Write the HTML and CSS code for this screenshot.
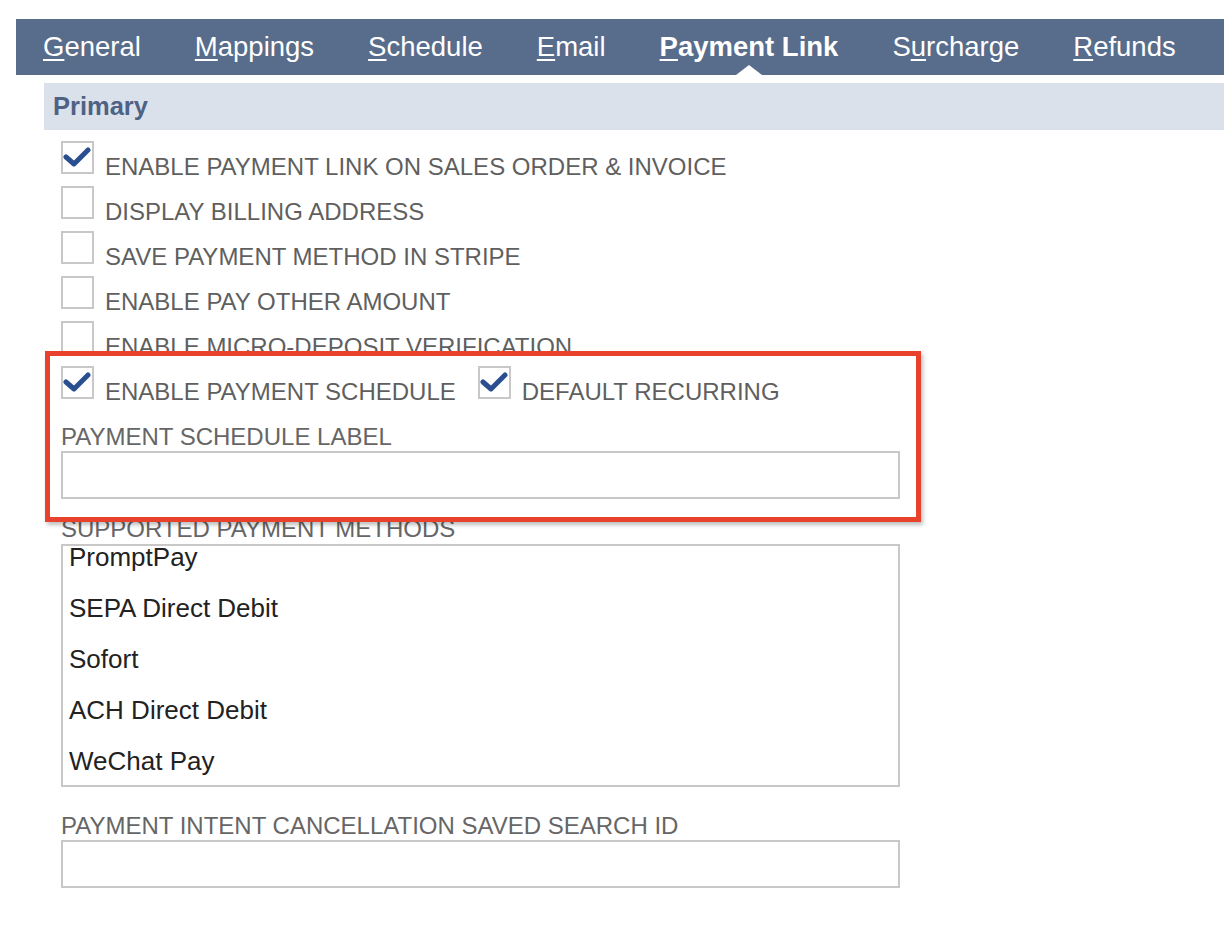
FILE: index.html
```html
<!DOCTYPE html>
<html>
<head>
  <title>Payment Link</title>
  <link rel="stylesheet" href="styles.css">
</head>
<body>
  <div class="tabs">
    <a class="tab"><u>G</u>eneral</a>
    <a class="tab"><u>M</u>appings</a>
    <a class="tab"><u>S</u>chedule</a>
    <a class="tab"><u>E</u>mail</a>
    <a class="tab active"><u>P</u>ayment Link</a>
    <a class="tab">S<u>u</u>rcharge</a>
    <a class="tab"><u>R</u>efunds</a>
  </div>

  <div class="section-head">Primary</div>

  <div class="form">
    <div class="check-row">
      <span class="box checked">
        <svg viewBox="0 0 29 29"><path d="M3 14l8 7 14-14" fill="none" stroke="#2a4f91" stroke-width="5" stroke-linecap="round" stroke-linejoin="round"/></svg>
      </span>
      <span class="check-label">ENABLE PAYMENT LINK ON SALES ORDER &amp; INVOICE</span>
    </div>
    <div class="check-row">
      <span class="box"></span>
      <span class="check-label">DISPLAY BILLING ADDRESS</span>
    </div>
    <div class="check-row">
      <span class="box"></span>
      <span class="check-label">SAVE PAYMENT METHOD IN STRIPE</span>
    </div>
    <div class="check-row">
      <span class="box"></span>
      <span class="check-label">ENABLE PAY OTHER AMOUNT</span>
    </div>
    <div class="check-row">
      <span class="box"></span>
      <span class="check-label">ENABLE MICRO-DEPOSIT VERIFICATION</span>
    </div>

    <div class="highlight">
      <div class="check-row">
        <span class="box checked">
          <svg viewBox="0 0 29 29"><path d="M3 14l8 7 14-14" fill="none" stroke="#2a4f91" stroke-width="5" stroke-linecap="round" stroke-linejoin="round"/></svg>
        </span>
        <span class="check-label">ENABLE PAYMENT SCHEDULE</span>
        <span class="box checked second">
          <svg viewBox="0 0 29 29"><path d="M3 14l8 7 14-14" fill="none" stroke="#2a4f91" stroke-width="5" stroke-linecap="round" stroke-linejoin="round"/></svg>
        </span>
        <span class="check-label">DEFAULT RECURRING</span>
      </div>
      <div class="field-label first">PAYMENT SCHEDULE LABEL</div>
      <div class="text-input"></div>
    </div>

    <div class="field-label under">SUPPORTED PAYMENT METHODS</div>
    <div class="listbox">
      <div class="list-item">PromptPay</div>
      <div class="list-item">SEPA Direct Debit</div>
      <div class="list-item">Sofort</div>
      <div class="list-item">ACH Direct Debit</div>
      <div class="list-item">WeChat Pay</div>
    </div>

    <div class="field-label spaced">PAYMENT INTENT CANCELLATION SAVED SEARCH ID</div>
    <div class="text-input"></div>
  </div>
</body>
</html>
```

FILE: styles.css
```css
body {
  margin: 0;
  font-family: "Liberation Sans", Arial, sans-serif;
  background: #ffffff;
  overflow: hidden;
}

.tabs {
  display: flex;
  margin: 19px 0 0 16px;
  height: 56px;
  background: #586c8b;
}

.tab {
  position: relative;
  padding: 0 27px;
  font-size: 27.5px;
  line-height: 56px;
  color: #ffffff;
  white-space: nowrap;
}

.tab u {
  text-decoration-thickness: 2px;
  text-underline-offset: 3px;
}

.tab.active {
  font-weight: bold;
}

.tab.active:after {
  content: "";
  position: absolute;
  left: 50%;
  bottom: 0;
  margin-left: -13px;
  border-left: 13px solid transparent;
  border-right: 13px solid transparent;
  border-bottom: 10px solid #ffffff;
}

.section-head {
  margin: 8px 0 0 44px;
  height: 47px;
  padding-left: 9px;
  background: #dbe1eb;
  font-size: 25.5px;
  font-weight: bold;
  line-height: 47px;
  color: #4d6284;
}

.form {
  width: 839px;
  margin-left: 61px;
  padding-top: 11px;
}

.check-row {
  display: flex;
  align-items: flex-start;
  height: 45px;
}

.box {
  position: relative;
  flex: none;
  width: 33px;
  height: 33px;
  box-sizing: border-box;
  border: 2px solid #c8c8c8;
  background: #ffffff;
}

.box svg {
  display: block;
  width: 29px;
  height: 29px;
}

.box.second {
  margin-left: 22px;
}

.check-label {
  margin: 12px 0 0 11px;
  font-size: 24px;
  line-height: 27px;
  color: #5f5f5f;
  white-space: nowrap;
}

.highlight {
  position: relative;
  z-index: 1;
  margin: -15px -21px 0 -16px;
  padding: 10px 16px 18px 11px;
  border: 5px solid #e8412c;
  background: #ffffff;
  box-shadow: 2px 3px 4px rgba(0, 0, 0, 0.25);
}

.field-label {
  font-size: 24px;
  line-height: 27px;
  color: #666666;
  white-space: nowrap;
}

.field-label.first {
  margin-top: 12px;
}

.field-label.under {
  margin-top: -7px;
}

.field-label.spaced {
  margin-top: 25px;
}

.text-input {
  height: 48px;
  margin-top: 1px;
  box-sizing: border-box;
  border: 2px solid #c8c8c8;
  background: #ffffff;
}

.listbox {
  height: 243px;
  margin-top: 2px;
  box-sizing: border-box;
  border: 2px solid #c8c8c8;
}

.list-item {
  padding-left: 6px;
  font-size: 26px;
  line-height: 51px;
  color: #222222;
}

.list-item:first-child {
  line-height: 23px;
  padding-bottom: 14px;
}
```
